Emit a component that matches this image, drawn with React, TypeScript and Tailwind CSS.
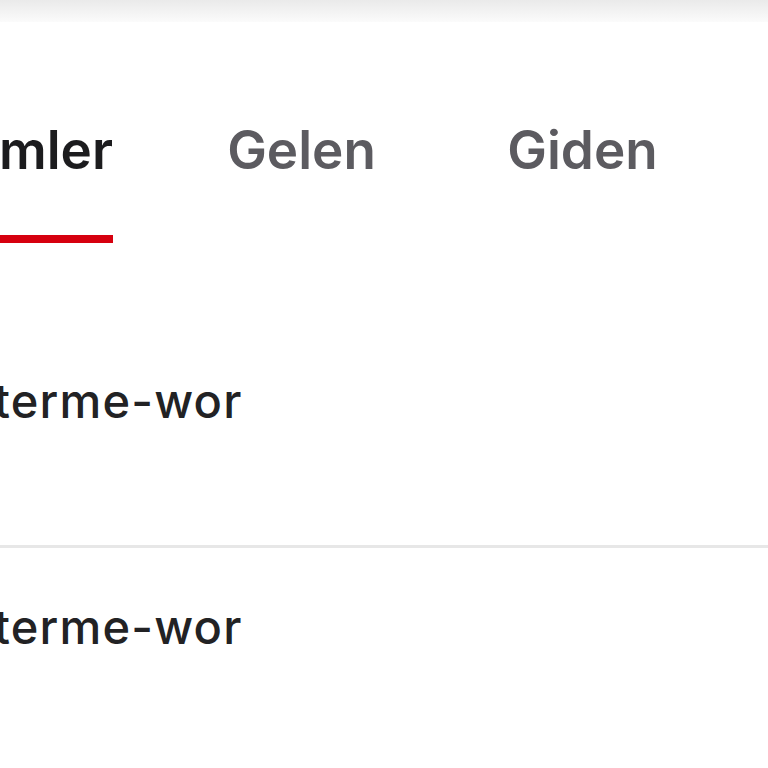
export default function App() {
  const tabs = [
    { label: "İşlemler", active: true },
    { label: "Gelen", active: false },
    { label: "Giden", active: false },
  ];

  return (
    <div className="w-[768px] h-[768px] overflow-hidden bg-white font-['Inter',sans-serif]">
      {/* top shadow strip */}
      <div className="h-[22px] bg-gradient-to-b from-[#eaeaea] to-[#fbfbfb]" />

      {/* tabs */}
      <div className="flex ml-[-120px] pt-[102px]">
        {tabs.map((tab) => (
          <div key={tab.label} className="w-[281px] shrink-0 flex justify-center">
            <div className={"flex flex-col items-stretch " + (tab.active ? "mr-[18px]" : "")}>
              <span
                className={
                  "text-[53px] leading-none font-semibold whitespace-nowrap " +
                  (tab.active ? "text-[#1c1c1e]" : "text-[#5c5b60]")
                }
              >
                {tab.label}
              </span>
              <div
                className={
                  "mt-[58px] h-[8px] " + (tab.active ? "bg-[#d6000f]" : "bg-transparent")
                }
              />
            </div>
          </div>
        ))}
      </div>

      {/* rows */}
      <div className="flex flex-col">
        <div className="h-[305px] border-b-[3px] border-[#e7e7e7] flex items-start pt-[134px]">
          <span className="ml-[-6px] text-[47px] leading-none font-medium tracking-[1.2px] text-[#222224] whitespace-nowrap">
            terme-wor
          </span>
        </div>
        <div className="h-[228px] border-b-[3px] border-[#e7e7e7] flex items-start pt-[55px]">
          <span className="ml-[-6px] text-[47px] leading-none font-medium tracking-[1.2px] text-[#222224] whitespace-nowrap">
            terme-wor
          </span>
        </div>
      </div>
    </div>
  );
}
